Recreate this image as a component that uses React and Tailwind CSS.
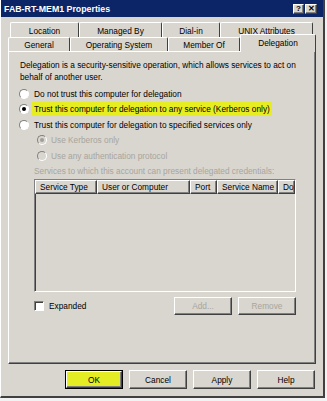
import React from 'react';

const raised =
  'border border-t-white border-l-white border-r-[#404040] border-b-[#404040] shadow-[inset_-1px_-1px_0_#808080]';
const sunken =
  'border border-t-[#808080] border-l-[#808080] border-r-white border-b-white shadow-[inset_1px_1px_0_#404040]';

const Radio = ({ checked, disabled }) => (
  <div
    className={`w-[10px] h-[10px] rounded-full flex items-center justify-center shrink-0 border border-t-[#808080] border-l-[#808080] border-r-white border-b-white ${
      disabled ? 'bg-[#d8d6cf]' : 'bg-white'
    }`}
  >
    {checked && (
      <div className={`w-[4px] h-[4px] rounded-full ${disabled ? 'bg-[#a09d96]' : 'bg-black'}`} />
    )}
  </div>
);

const BackTab = ({ label, w }) => (
  <div
    className={`${w} h-[15px] flex items-start justify-center pt-[2px] border-t border-l border-r border-t-white border-l-white border-r-[#404040] rounded-t-[2px]`}
  >
    {label}
  </div>
);

const FrontTab = ({ label, w, selected }) => (
  <div
    className={`${w} flex justify-center border-t border-l border-r border-t-white border-l-white border-r-[#404040] rounded-t-[2px] bg-[#d8d6cf] ${
      selected ? 'h-[18px] pt-[2px] relative z-10 top-[1px]' : 'h-[14px] pt-[1px]'
    }`}
  >
    {label}
  </div>
);

const Col = ({ label, w }) => (
  <div className={`${w} shrink-0 h-full ${raised} pl-[4px] flex items-center whitespace-nowrap`}>
    {label}
  </div>
);

const Button = ({ label, disabled, def }) => (
  <div
    className={`w-[58px] h-full flex items-center justify-center ${
      def ? 'border border-black' : ''
    }`}
  >
    <div
      className={`w-full h-full flex items-center justify-center ${raised} ${
        def ? 'bg-[#e4ec24]' : ''
      } ${disabled ? 'text-[#a8a59e]' : 'text-black'}`}
    >
      {label}
    </div>
  </div>
);

export default function App() {
  return (
    <div className="w-[327px] h-[401px] bg-[#f2f2f2] font-['Liberation_Sans',Arial,sans-serif] text-[8.3px] leading-[12px] text-black">
      <div className="w-[325px] h-[398px] bg-[#d8d6cf] border-l border-l-white border-r-2 border-r-[#404040] border-b-2 border-b-[#404040] flex flex-col">
        {/* Title bar */}
        <div className="h-[17px] bg-[#0c2566] flex items-center justify-between pl-[3px] pr-[6px]">
          <span className="text-white font-bold text-[8.8px]">FAB-RT-MEM1 Properties</span>
          <div className="flex gap-[1px]">
            <div className={`w-[11px] h-[10px] bg-[#d8d6cf] ${raised} flex items-center justify-center text-[8px] font-bold leading-none`}>?</div>
            <div className={`w-[12px] h-[10px] bg-[#d8d6cf] ${raised} flex items-center justify-center text-[8px] font-bold leading-none`}>✕</div>
          </div>
        </div>

        <div className="pl-[7px] pt-[5px]">
          {/* Tabs */}
          <div className="flex pl-[2px]">
            <BackTab label="Location" w="w-[69px]" />
            <BackTab label="Managed By" w="w-[83px]" />
            <BackTab label="Dial-in" w="w-[58px]" />
            <BackTab label="UNIX Attributes" w="w-[93px]" />
          </div>
          <div className="flex h-[14px] items-end">
            <FrontTab label="General" w="w-[62px]" />
            <FrontTab label="Operating System" w="w-[98px]" />
            <FrontTab label="Member Of" w="w-[72px]" />
            <FrontTab label="Delegation" w="w-[76px]" selected />
          </div>

          {/* Panel */}
          <div className={`w-[308px] h-[313px] ${raised} pl-[10px] pt-[7px] flex flex-col`}>
            <p className="pl-[1px]">
              Delegation is a security-sensitive operation, which allows services to act on
              <br />
              behalf of another user.
            </p>

            <div className="mt-[3px] flex flex-col">
              <div className="h-[15.5px] flex items-center gap-[5px]">
                <Radio />
                <span>Do not trust this computer for delegation</span>
              </div>
              <div className="h-[15.5px] flex items-center gap-[3px]">
                <Radio checked />
                <span className="bg-[#e6ee22] px-[2px] py-[1px]">
                  Trust this computer for delegation to any service (Kerberos only)
                </span>
              </div>
              <div className="h-[15.5px] flex items-center gap-[5px]">
                <Radio />
                <span>Trust this computer for delegation to specified services only</span>
              </div>
              <div className="h-[15.5px] flex items-center gap-[4px] pl-[18px] text-[#a8a59e]">
                <Radio checked disabled />
                <span>Use Kerberos only</span>
              </div>
              <div className="h-[15.5px] flex items-center gap-[4px] pl-[18px] text-[#a8a59e]">
                <Radio disabled />
                <span>Use any authentication protocol</span>
              </div>
            </div>

            <p className="mt-[1.5px] pl-[15px] text-[#a8a59e]">
              Services to which this account can present delegated credentials:
            </p>

            {/* List view */}
            <div className={`mt-[2px] ml-[15px] w-[262px] h-[113px] ${sunken} overflow-hidden`}>
              <div className="flex h-[14px]">
                <Col label="Service Type" w="w-[62px]" />
                <Col label="User or Computer" w="w-[93px]" />
                <Col label="Port" w="w-[27px]" />
                <Col label="Service Name" w="w-[61px]" />
                <Col label="Do" w="w-[17px]" />
              </div>
            </div>

            <div className="mt-[5px] ml-[15px] w-[262px] h-[18px] flex items-center justify-between">
              <div className="flex items-center gap-[5px]">
                <div className={`w-[10px] h-[10px] bg-white ${sunken}`} />
                <span>Expanded</span>
              </div>
              <div className="flex gap-[6px] h-full">
                <Button label="Add..." disabled />
                <Button label="Remove" disabled />
              </div>
            </div>
          </div>

          {/* Dialog buttons */}
          <div className="mt-[6px] h-[19px] flex justify-end gap-[6px] pr-[1px] w-[308px]">
            <Button label="OK" def />
            <Button label="Cancel" />
            <Button label="Apply" />
            <Button label="Help" />
          </div>
        </div>
      </div>
    </div>
  );
}
